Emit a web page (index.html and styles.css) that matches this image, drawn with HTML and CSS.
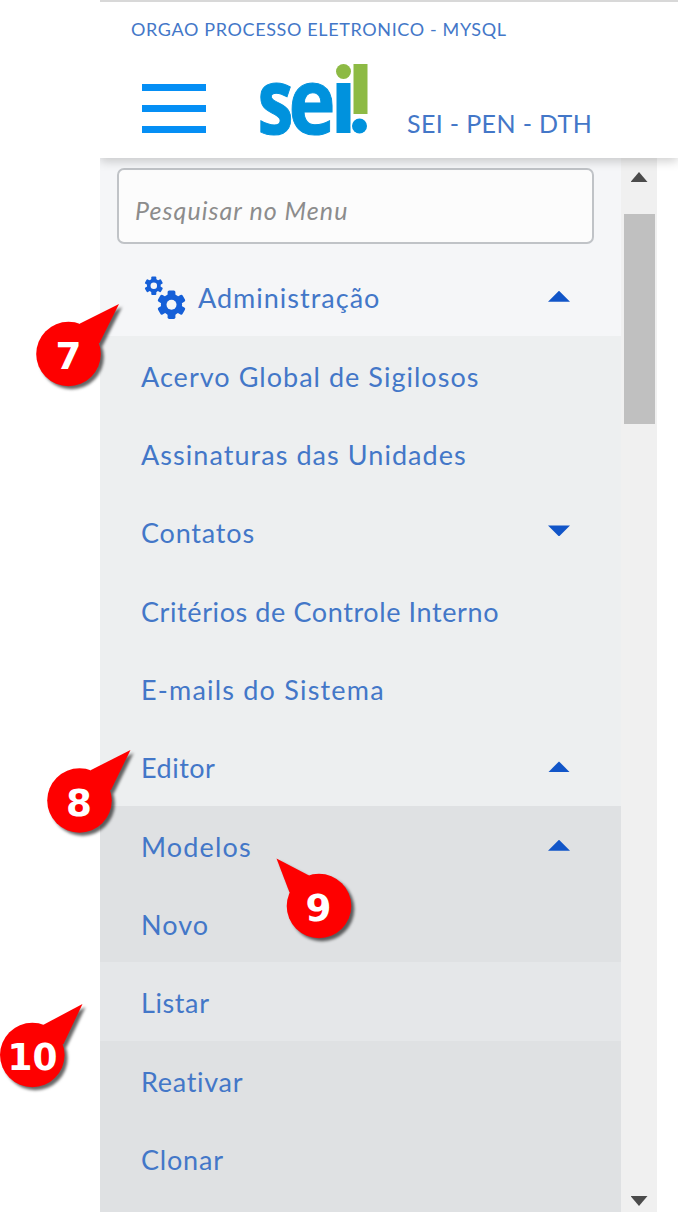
FILE: index.html
```html
<!DOCTYPE html>
<html lang="pt-BR">
<head>
<meta charset="utf-8">
<title>SEI - Menu</title>
<link rel="stylesheet" href="styles.css">
</head>
<body>
<main class="app">
  <header class="header">
    <div class="org"><span class="t-org">ORGAO PROCESSO ELETRONICO - MYSQL</span></div>
    <div class="brand">
      <div class="burger"><i></i><i></i><i></i></div>
      <svg class="logo" width="112" height="96" viewBox="0 0 112 96" role="img" aria-label="sei!">
        <text class="logo-text" x="-1.500" y="71" textLength="36" lengthAdjust="spacingAndGlyphs">s</text>
        <text class="logo-text" x="29.500" y="71" textLength="47" lengthAdjust="spacingAndGlyphs">e</text>
        <rect x="76" y="20" width="18" height="53" fill="#fff"/>
        <rect x="77.500" y="20" width="14" height="50" fill="#0092dd"/>
        <circle cx="84.500" cy="8.500" r="7.500" fill="#8dba44"/>
        <rect x="94.500" y="1" width="14" height="50" fill="#8dba44"/>
        <circle cx="100.500" cy="63" r="8.700" fill="#fff"/>
        <circle cx="100.500" cy="63" r="7.500" fill="#0092dd"/>
      </svg>
      <span class="system"><span class="t-sys">SEI - PEN - DTH</span></span>
    </div>
  </header>
  <div class="body">
    <nav class="menu">
      <div class="search"><span class="t-search">Pesquisar no Menu</span></div>
      <div class="row admin">
        <svg class="gears" width="42" height="44" viewBox="0 0 42 44">
          <defs>
            <g id="gear">
              <circle r="10.600" fill="#155fd8"/>
              <g fill="#155fd8">
                <rect x="-3.900" y="-14.200" width="7.800" height="28.400" rx="1.600"/>
                <rect x="-3.900" y="-14.200" width="7.800" height="28.400" rx="1.600" transform="rotate(60)"/>
                <rect x="-3.900" y="-14.200" width="7.800" height="28.400" rx="1.600" transform="rotate(120)"/>
              </g>
              <circle r="5" fill="#f5f6f8"/>
            </g>
          </defs>
          <use href="#gear" transform="translate(9.800 10.700) scale(.65)"/>
          <use href="#gear" transform="translate(27.500 29.700)"/>
        </svg>
        <span class="t-adm">Administração</span><b class="up"></b>
      </div>
      <div class="sub">
        <div class="row"><span class="t-ace">Acervo Global de Sigilosos</span></div>
        <div class="row"><span class="t-ass">Assinaturas das Unidades</span></div>
        <div class="row"><span class="t-con">Contatos</span><b class="down"></b></div>
        <div class="row"><span class="t-cri">Critérios de Controle Interno</span></div>
        <div class="row"><span class="t-ema">E-mails do Sistema</span></div>
        <div class="row"><span class="t-edi">Editor</span><b class="up"></b></div>
      </div>
      <div class="deep">
        <div class="row"><span class="t-mod">Modelos</span><b class="up"></b></div>
        <div class="row"><span class="t-nov">Novo</span></div>
        <div class="row hover"><span class="t-lis">Listar</span></div>
        <div class="row"><span class="t-rea">Reativar</span></div>
        <div class="row"><span class="t-clo">Clonar</span></div>
      </div>
    </nav>
    <div class="scrollbar"><b class="sb-up"></b><div class="thumb"></div><b class="sb-down"></b></div>
  </div>
</main>
<svg class="callouts" width="678" height="1212" viewBox="0 0 678 1212">
  <g class="pin"><circle cx="68.500" cy="354" r="32.300"/><path d="M80 323.500L119 304L99.500 343L80 350Z"/></g>
  <g class="pin"><circle cx="79.500" cy="800.500" r="32.300"/><path d="M91 770L130.500 750L111 790L91 797Z"/></g>
  <g class="pin"><circle cx="319" cy="906" r="32.300"/><path d="M276.500 858.500L309 875.500L309 895L289.500 892.500Z"/></g>
  <g class="pin"><circle cx="32.300" cy="1055" r="32.300"/><path d="M43 1025L82.500 1004L63.500 1044L43 1050Z"/></g>
  <g class="num">
    <text x="68.500" y="369" textLength="26" lengthAdjust="spacingAndGlyphs">7</text>
    <text x="79" y="816" textLength="26" lengthAdjust="spacingAndGlyphs">8</text>
    <text x="318.500" y="921" textLength="26" lengthAdjust="spacingAndGlyphs">9</text>
    <text x="32.500" y="1070" textLength="50" lengthAdjust="spacingAndGlyphs">10</text>
  </g>
</svg>
</body>
</html>
```
FILE: styles.css
```css
* { box-sizing: border-box; }
body {
  margin: 0;
  position: relative;
  width: 678px;
  height: 1212px;
  overflow: hidden;
  background: #fff;
  font-family: Lato, "Liberation Sans", sans-serif;
  font-size: 27px;
  color: #4377c8;
}
.app { margin-left: 100px; height: 1212px; display: flex; flex-direction: column; }
.header {
  height: 158px;
  flex: none;
  border-top: 2px solid #d8d8d8;
  background: #fff;
  box-shadow: 0 3px 10px rgba(0, 0, 0, .2);
  clip-path: inset(0 0 -16px 0);
  z-index: 1;
}
.org { padding: 16px 0 0 31px; font-size: 18px; line-height: 22px; height: 60px; white-space: nowrap; }
.brand { display: flex; align-items: flex-start; }
.burger { width: 64px; margin: 22px 0 0 42px; display: flex; flex-direction: column; gap: 14px; }
.burger i { height: 7px; background: #058ff5; }
.logo { margin: 1px 0 -20px 53px; overflow: visible; }
.logo-text { font: 700 91px "Open Sans", sans-serif; fill: #0092dd; stroke: #0092dd; stroke-width: 1px; }
.system { font-size: 25px; line-height: 30px; margin: 46px 0 0 36px; white-space: nowrap; }
.body { flex: 1; display: flex; min-height: 0; }
.menu { width: 521px; background: #f5f6f8; padding-top: 10px; overflow: hidden; display: flex; flex-direction: column; }
.search {
  width: 477px;
  height: 76px;
  flex: none;
  margin-left: 17px;
  margin-bottom: 13.2px;
  padding: 8px 0 0 16px;
  display: flex;
  align-items: center;
  border: 2px solid #c0c3c7;
  border-radius: 7px;
  background: #fcfcfc;
  color: #8c8c8c;
  font-style: italic;
  font-size: 25px;
  white-space: nowrap;
}
.row { height: 78.35px; flex: none; padding: 3px 51px 0 41px; display: flex; align-items: center; justify-content: space-between; white-space: nowrap; }
.admin { justify-content: flex-start; padding-top: 2px; }
.admin .up { margin-left: auto; }
.gears { margin: -1px 12px 0 3px; }
.sub { background: #edeff0; flex: none; }
.deep { background: #dfe1e3; flex: 1 0 auto; }
.hover { background: #e5e7e9; }
.up, .down { width: 22px; height: 11px; margin-top: -2px; background: #1155c8; clip-path: polygon(50% 0, 100% 100%, 0 100%); }
.down { clip-path: polygon(0 0, 100% 0, 50% 100%); margin-top: -4px; }
.scrollbar { width: 36px; background: #f0f0f0; display: flex; flex-direction: column; align-items: center; }
.sb-up, .sb-down { width: 17px; height: 10px; background: #4b4b4b; clip-path: polygon(50% 0, 100% 100%, 0 100%); margin-top: 14px; }
.thumb { width: 31px; height: 210px; margin-top: 32px; background: #c0c0c0; }
.sb-down { clip-path: polygon(0 0, 100% 0, 50% 100%); margin-top: auto; margin-bottom: 6px; }
.callouts { position: absolute; left: 0; top: 0; z-index: 2; }
.pin { fill: #fe0000; filter: drop-shadow(3px 3px 1.5px rgba(0, 0, 0, .6)); }
.num { fill: #fff; font: 700 38px "DejaVu Sans", sans-serif; text-anchor: middle; }

.t-org { letter-spacing: .63px; }
.t-sys { letter-spacing: .36px; }
.t-search { letter-spacing: 1.05px; }
.t-adm { letter-spacing: 1px; }
.t-ace { letter-spacing: 1.03px; }
.t-ass { letter-spacing: 1.05px; }
.t-con { letter-spacing: .8px; }
.t-cri { letter-spacing: .6px; }
.t-ema { letter-spacing: 1.2px; }
.t-edi { letter-spacing: .5px; }
.t-mod { letter-spacing: 1.15px; }
.t-nov { letter-spacing: 1px; }
.t-lis { letter-spacing: .6px; }
.t-rea { letter-spacing: .7px; }
.t-clo { letter-spacing: .8px; }
```
